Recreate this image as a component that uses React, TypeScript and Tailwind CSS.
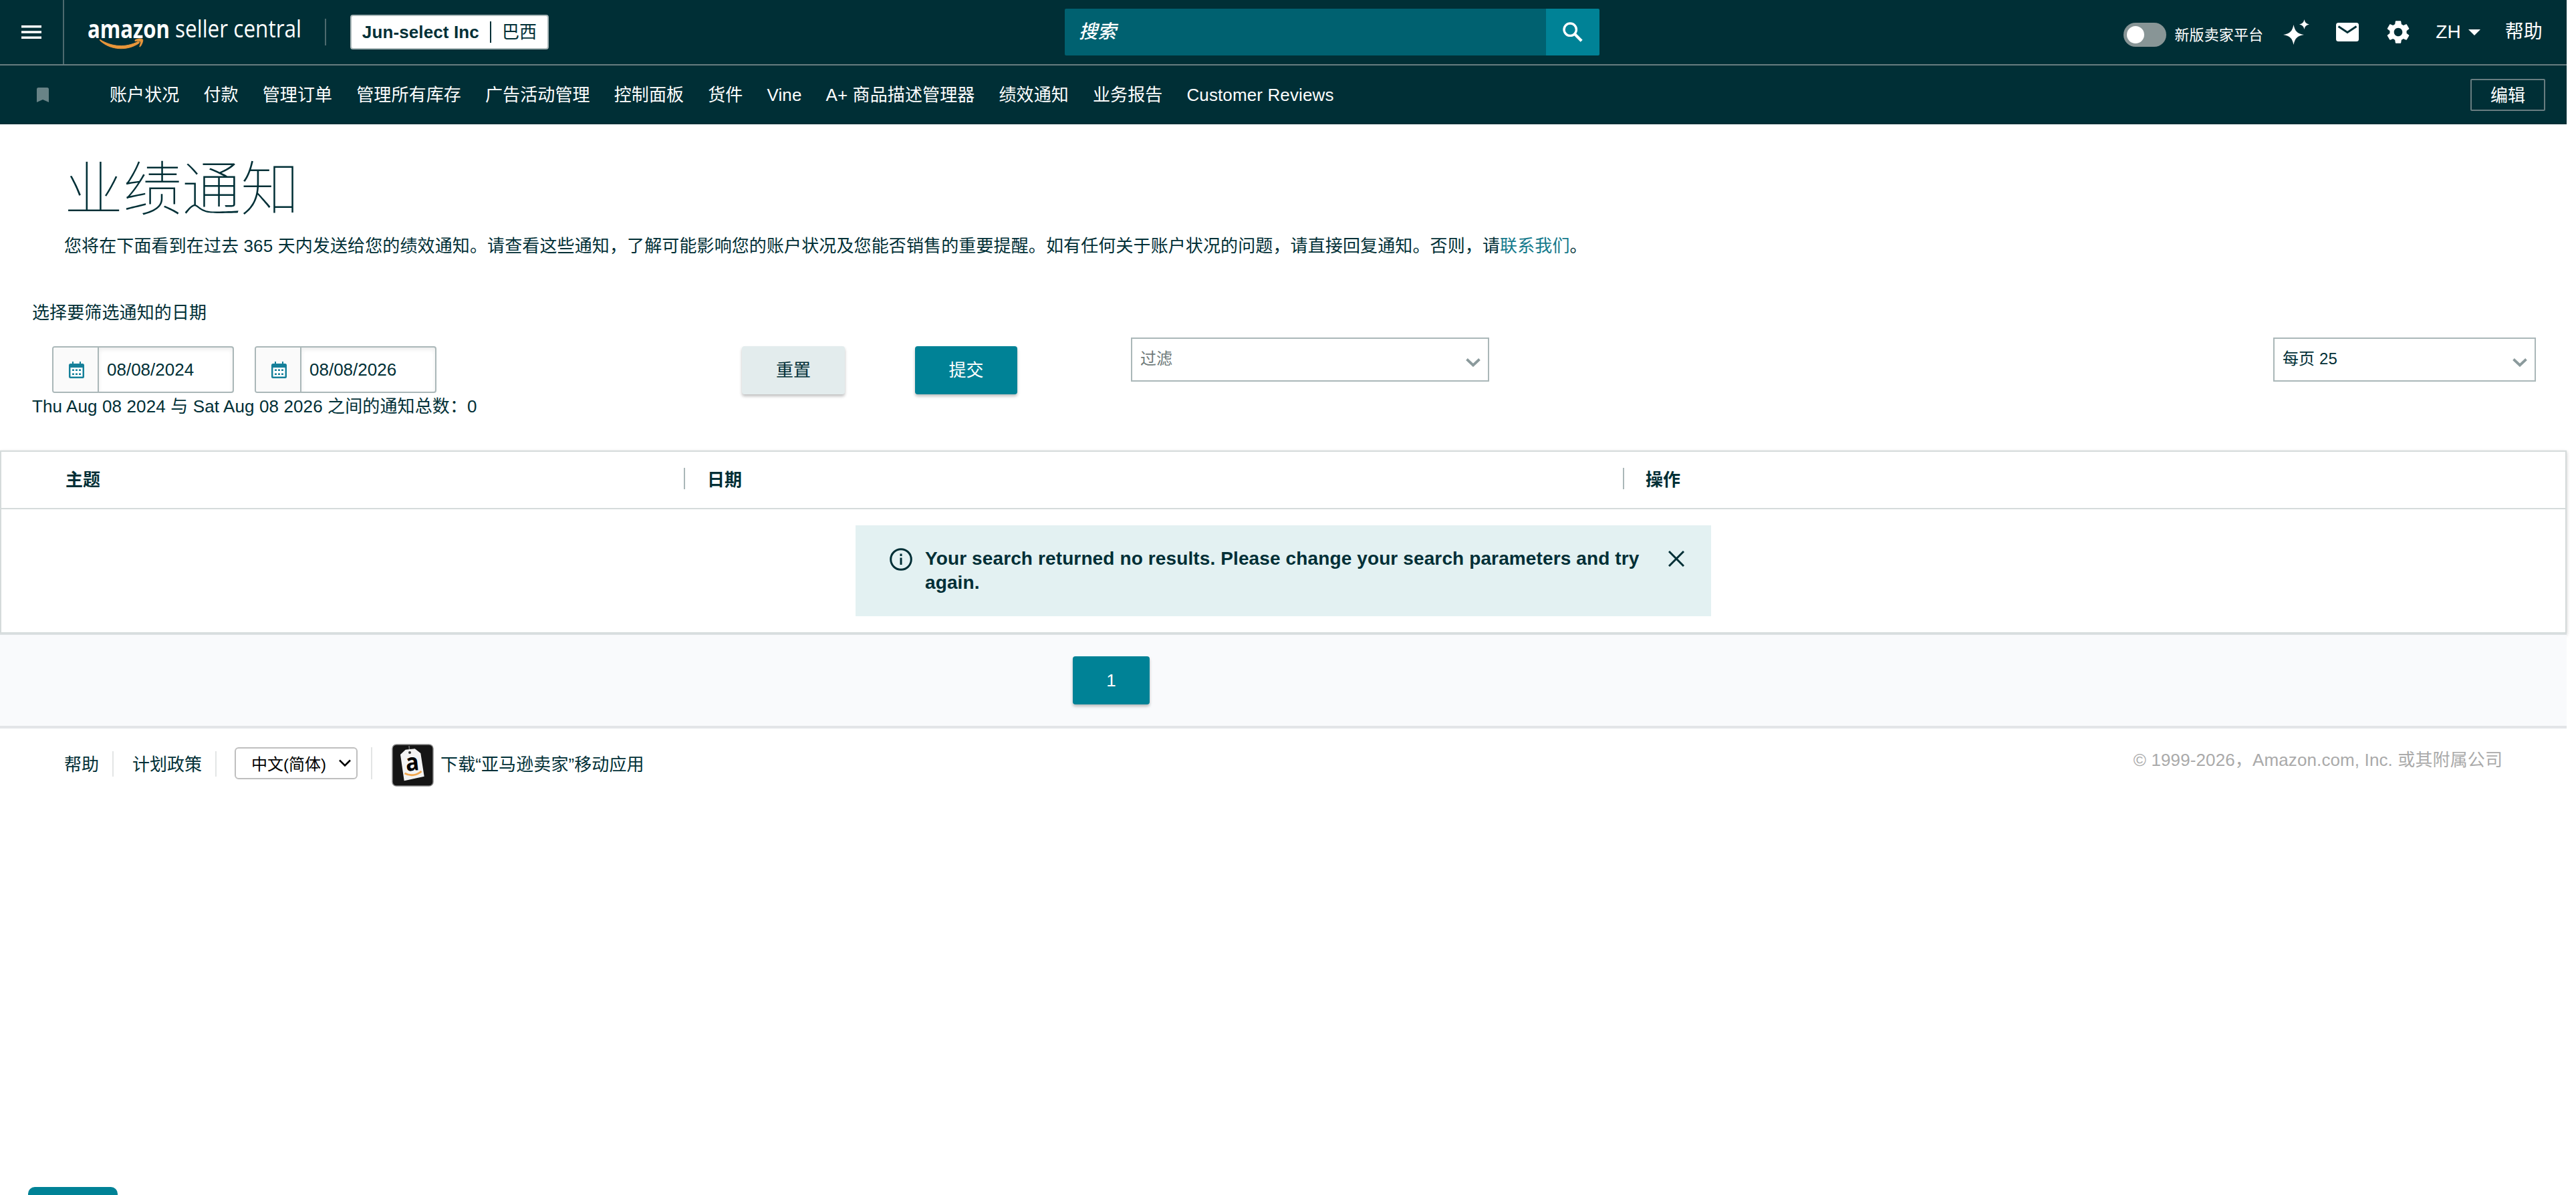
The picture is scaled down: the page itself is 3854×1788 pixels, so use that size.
import type { FC, ReactNode } from 'react';

const NAV_ITEMS = [
  '账户状况',
  '付款',
  '管理订单',
  '管理所有库存',
  '广告活动管理',
  '控制面板',
  '货件',
  'Vine',
  'A+ 商品描述管理器',
  '绩效通知',
  '业务报告',
  'Customer Reviews',
];

const Logo: FC = () => (
  <svg className="ml-[24px] h-[96px] w-[366px] shrink-0 overflow-visible" viewBox="120 0 366 96" fill="none">
    <text
      x="131"
      y="57"
      textLength="123"
      lengthAdjust="spacingAndGlyphs"
      className="fill-white font-['Open_Sans'] text-[37px] font-bold tracking-normal"
    >
      amazon
    </text>
    <text
      x="262"
      y="56"
      textLength="189"
      lengthAdjust="spacingAndGlyphs"
      className="fill-white font-['Open_Sans'] text-[37px] tracking-normal"
    >
      seller central
    </text>
    <path d="M150 59.500c18 11 38 12 56 3 2-1 3.500.500 2 2-17 12-43 11-58.500-4-.500-.8-.3-1.400.500-1z" fill="#e8963a" stroke="#e8963a" />
    <path d="M202 60c4-2.500 10.500-2.500 11.500-1s-1 7.500-3.500 10.500c-1 1-1.500.500-1-.5 1-2.500 2-6 1-7s-5-1-8-.5z" fill="#e8963a" stroke="#e8963a" />
  </svg>
);

const TopBar: FC = () => (
  <header className="flex h-[98px] items-center border-b-2 border-[#687d80] bg-[#002f36] text-white">
    <div className="flex h-full w-[96px] shrink-0 items-center justify-center border-r-2 border-[#4d6a6e]">
      <svg className="h-5 w-[30px]" viewBox="0 0 30 20" fill="#fff">
        <path d="M0 0h30v3.4H0zM0 8.3h30v3.4H0zM0 16.6h30V20H0z" />
      </svg>
    </div>
    <Logo />
    <div className="h-10 w-[2px] bg-[#4d6a6e]" />
    <button className="ml-[36px] flex h-[52px] w-[297px] items-center justify-center rounded-[4px] border-2 border-[#aab7b8] bg-white text-[26px] text-[#002f36]">
      <span className="font-bold">Jun-select Inc</span>
      <span className="mx-[16px] h-8 w-[2px] bg-[#002f36]" />
      <span>巴西</span>
    </button>
    <div className="ml-[772px] flex h-[70px] w-[800px] overflow-hidden rounded-[2px]">
      <div className="flex flex-1 items-center bg-[#006170] pl-[21px] text-[28px] font-medium italic">搜索</div>
      <button className="flex w-[80px] items-center justify-center bg-[#008296]">
        <svg className="h-[30px] w-[30px]" viewBox="0 0 30 30" fill="none" stroke="#fff" strokeWidth="3.4">
          <circle cx="11.2" cy="11.2" r="9.2" />
          <path d="M17.8 17.8l10.4 10.4" strokeWidth="4.2" />
        </svg>
      </button>
    </div>
    <div className="ml-auto mr-[36px] flex items-center">
      <div className="mt-2 flex h-9 w-[64px] items-center rounded-full bg-[#889596] pl-[5px]">
        <div className="h-[26px] w-[26px] rounded-full bg-white" />
      </div>
      <span className="ml-[12px] mt-2 text-[22px]">新版卖家平台</span>
      <svg className="ml-[30px] h-[38px] w-[39px]" viewBox="0 0 39 38" fill="#fff">
        <path d="M15.5 8c2 9.500 5 13 15.500 15-10.500 2-13.500 5.500-15.500 15C13.500 28.500 10.500 25 0 23c10.500-2 13.500-5.500 15.500-15z" />
        <path d="M31.500 0c1 4.600 2.600 6.400 7.500 7.500-4.900 1.100-6.500 2.900-7.500 7.500-1-4.600-2.600-6.400-7.500-7.500 4.900-1.100 6.500-2.900 7.500-7.500z" />
      </svg>
      <svg className="ml-[40px] h-[28px] w-[34px]" viewBox="0 0 34 28">
        <rect width="34" height="28" rx="3.500" fill="#fff" />
        <path d="M3.500 5.500L17 14.500l13.500-9" fill="none" stroke="#002f36" strokeWidth="3" />
      </svg>
      <svg className="ml-[38px] h-[42px] w-[42px]" viewBox="0 0 24 24" fill="#fff">
        <path d="M19.140 12.940c.04-.3.06-.61.06-.94 0-.32-.02-.64-.07-.94l2.030-1.580c.18-.14.23-.41.12-.61l-1.920-3.320c-.12-.22-.37-.29-.59-.22l-2.390.96c-.5-.38-1.030-.7-1.620-.94l-.36-2.540c-.04-.24-.24-.41-.48-.41h-3.840c-.24 0-.43.17-.47.41l-.36 2.540c-.59.24-1.130.57-1.620.94l-2.390-.96c-.22-.08-.47 0-.59.22L2.740 8.870c-.12.21-.08.47.12.61l2.030 1.580c-.05.3-.09.63-.09.94s.02.64.07.94l-2.030 1.580c-.18.14-.23.41-.12.61l1.920 3.320c.12.22.37.29.59.22l2.390-.96c.5.38 1.030.7 1.620.94l.36 2.540c.05.24.24.41.48.41h3.840c.24 0 .44-.17.47-.41l.36-2.540c.59-.24 1.130-.56 1.620-.94l2.390.96c.22.08.47 0 .59-.22l1.920-3.320c.12-.22.07-.47-.12-.61l-2.010-1.580zM12 15.600c-1.980 0-3.600-1.620-3.600-3.600s1.620-3.600 3.600-3.600 3.600 1.620 3.600 3.600-1.620 3.600-3.600 3.600z" />
      </svg>
      <span className="ml-[35px] text-[28px]">ZH</span>
      <svg className="ml-[11px] h-[9px] w-[18px]" viewBox="0 0 18 9" fill="#fff">
        <path d="M0 0h18L9 9z" />
      </svg>
      <span className="ml-[37px] text-[28px]">帮助</span>
    </div>
  </header>
);

const NavBar: FC = () => (
  <nav className="flex h-[88px] items-center bg-[#002f36] text-[26px] text-white">
    <svg className="ml-[55px] h-[22px] w-[18px]" viewBox="0 0 18 22" fill="#688387">
      <path d="M2.500 0h13A2.500 2.500 0 0 1 18 2.500V22l-9-4-9 4V2.500A2.500 2.500 0 0 1 2.500 0z" />
    </svg>
    <ul className="ml-[91px] flex gap-[36px]">
      {NAV_ITEMS.map((item) => (
        <li key={item}>{item}</li>
      ))}
    </ul>
    <button className="ml-auto mr-[32px] h-12 w-[112px] rounded-[2px] border-2 border-[#687d80] pt-[3px]">编辑</button>
  </nav>
);

const DateInput: FC<{ value: string }> = ({ value }) => (
  <div className="flex h-[70px] w-[272px] overflow-hidden rounded-[4px] border-2 border-[#aab7b8] bg-white tracking-normal">
    <div className="flex w-[68px] items-center justify-center border-r-2 border-[#aab7b8] bg-[#fafafa] pl-[2px]">
      <svg className="h-[25px] w-[23px]" viewBox="0 0 23 25">
        <path d="M5 0h2v3h9V0h2v3h2.500A2.500 2.500 0 0 1 23 5.500v17a2.500 2.500 0 0 1-2.500 2.500h-18A2.500 2.500 0 0 1 0 22.500v-17A2.500 2.500 0 0 1 2.500 3H5z" fill="#15809a" />
        <path d="M2.500 9h18v13.500h-18z" fill="#fff" />
        <path d="M5 11.500h3v2.500H5zm5 0h3v2.500h-3zm5 0h3v2.500h-3zM5 17.500h3V20H5zm5 0h3V20h-3zm5 0h3V20h-3z" fill="#15809a" />
      </svg>
    </div>
    <div className="flex flex-1 items-center pl-[12px] shadow-[inset_0_3px_6px_rgba(0,0,0,0.08)]">{value}</div>
  </div>
);

const SelectBox: FC<{ className: string; children: ReactNode }> = ({ className, children }) => (
  <div className={`flex h-[66px] justify-between border-2 border-[#aab7b8] bg-white pl-[12px] pr-[11px] text-[24px] ${className}`}>
    <span className="mt-[12px]">{children}</span>
    <svg className="mt-[29px] h-[13px] w-[22px]" viewBox="0 0 22 13" fill="none" stroke="#8b9a9c" strokeWidth="3.800">
      <path d="M1.500 1.500L11 10.500l9.500-9" />
    </svg>
  </div>
);

const Filters: FC = () => (
  <section className="flex h-[156px] items-start">
    <div className="w-[1110px] pt-[13px]">
      <div className="flex gap-[31px] pl-[78px]">
        <DateInput value="08/08/2024" />
        <DateInput value="08/08/2026" />
      </div>
      <p className="pl-[48px] leading-[40px]">Thu Aug 08 2024 与 Sat Aug 08 2026 之间的通知总数：0</p>
    </div>
    <button className="mt-[13px] h-[72px] w-[154px] rounded-[4px] bg-[#e3eced] shadow-[0_3px_4px_rgba(0,0,0,0.25)]">重置</button>
    <button className="ml-[105px] mt-[13px] h-[72px] w-[153px] rounded-[4px] bg-[#008296] text-white shadow-[0_3px_4px_rgba(0,0,0,0.25)]">
      提交
    </button>
    <SelectBox className="ml-[170px] w-[536px] text-[#6f7b7b]">过滤</SelectBox>
    <SelectBox className="ml-auto mr-[46px] w-[393px]">每页 25</SelectBox>
  </section>
);

const ResultsTable: FC = () => (
  <section className="mt-[13px] h-[274px] border-2 border-[#d5dbdb] bg-white shadow-[0_2px_5px_rgba(0,0,0,0.22)]">
    <div className="flex h-[86px] border-b-2 border-[#d5dbdb] pt-6 font-bold leading-[36px]">
      <div className="w-[1021px] pl-[96px]">主题</div>
      <div className="h-8 w-[1405px] border-l-2 border-[#aab7b8] pl-[33px]">日期</div>
      <div className="h-8 border-l-2 border-[#aab7b8] pl-[32px]">操作</div>
    </div>
    <div className="mx-auto mt-6 flex h-[136px] w-[1280px] bg-[#e3f1f2] pt-8">
      <svg className="ml-[51px] mt-[2px] h-[34px] w-[34px] shrink-0" viewBox="0 0 34 34" fill="none" stroke="#002f36" strokeWidth="3">
        <circle cx="17" cy="17" r="15.300" />
        <path d="M17 14.500V25M17 8.500v3.500" />
      </svg>
      <p className="ml-[19px] w-[1090px] text-[28px] font-bold leading-[36px] tracking-[0.12px]">
        Your search returned no results. Please change your search parameters and try again.
      </p>
      <svg className="ml-[22px] mt-[6px] h-6 w-6 shrink-0" viewBox="0 0 24 24" stroke="#002f36" strokeWidth="3">
        <path d="M1 1l22 22M23 1L1 23" />
      </svg>
    </div>
  </section>
);

const AppIcon: FC = () => (
  <svg className="ml-[29px] mt-[-2px] h-[64px] w-[63px]" viewBox="0 0 63 64">
    <rect x="1" y="1" width="61" height="62" rx="6" fill="#151515" stroke="#8a8a8a" strokeWidth="1.500" />
    <path d="M26 3l1 10" stroke="#777" strokeWidth="1.500" />
    <path d="M13 16l7.700-7.300 14-1.400 8.600 6.700 5.400 34.700-30 6.600z" fill="#f3f3f3" />
    <circle cx="27" cy="13" r="2" fill="#333" />
    <text
      x="21"
      y="40"
      textLength="20"
      lengthAdjust="spacingAndGlyphs"
      className="fill-black font-['Open_Sans'] text-[36px] font-bold tracking-normal"
      transform="rotate(-6 30 32)"
    >
      a
    </text>
    <path d="M19.500 44c8 4.500 18 3.500 25-3" fill="none" stroke="#f2a850" strokeWidth="3" />
  </svg>
);

const Footer: FC = () => (
  <footer className="flex items-start pt-6 tracking-normal">
    <div className="flex h-[64px] items-center">
      <span className="mt-[-4px] pl-[96px]">帮助</span>
      <span className="ml-[20px] mt-[-6px] h-[38px] w-[2px] bg-[#e3e5e5]" />
      <span className="ml-[28px] mt-[-4px]">计划政策</span>
      <span className="ml-[20px] mt-[-6px] h-[38px] w-[2px] bg-[#e3e5e5]" />
      <div className="ml-[27px] mt-[-8px] flex h-12 w-[184px] items-center justify-between rounded-[6px] border-2 border-[#bfbfbf] pl-[23px] pr-[8px] text-[24px] text-black">
        <span className="pt-[3px]">中文(简体)</span>
        <svg className="h-[12px] w-[18px]" viewBox="0 0 18 12" fill="none" stroke="#000" strokeWidth="2.600">
          <path d="M1 1.500l8 8 8-8" />
        </svg>
      </div>
      <span className="ml-[20px] mt-[-8px] h-12 w-[2px] bg-[#e3e5e5]" />
      <AppIcon />
      <span className="ml-[10px] mt-[-4px] tracking-[0.1px]">下载“亚马逊卖家”移动应用</span>
    </div>
    <span className="ml-auto mr-[96px] mt-[4px] text-[#aaa] tracking-[0.12px]">© 1999-2026，Amazon.com, Inc. 或其附属公司</span>
  </footer>
);

export default function App() {
  return (
    <div className="h-[1788px] w-full overflow-hidden bg-white">
      <div className="w-[3840px] font-['Liberation_Sans','Noto_Sans_CJK_SC',sans-serif] text-[26px] tracking-[0.12px] text-[#002f36]">
        <TopBar />
        <NavBar />
        <h1 className="mt-[35px] pl-[96px] text-[88px] font-thin leading-[126px] tracking-normal">业绩通知</h1>
        <p className="mt-[1px] pl-[96px] leading-[40px]">
          您将在下面看到在过去 365 天内发送给您的绩效通知。请查看这些通知，了解可能影响您的账户状况及您能否销售的重要提醒。如有任何关于账户状况的问题，请直接回复通知。否则，请
          <a className="text-[#157a8c]">联系我们</a>。
        </p>
        <p className="mb-[17px] mt-[60px] pl-[48px] leading-[40px]">选择要筛选通知的日期</p>
        <Filters />
        <ResultsTable />
        <div className="relative h-[142px] border-b-4 border-t-2 border-b-[#e3e5e8] border-t-[#dde1e3] bg-[#f9fafc] pt-8">
          <button className="ml-[1605px] h-[72px] w-[115px] rounded-[4px] bg-[#008296] text-white shadow-[0_3px_4px_rgba(0,0,0,0.25)]">1</button>
        </div>
        <Footer />
      </div>
      <div className="fixed bottom-0 left-[42px] h-[12px] w-[134px] rounded-t-[10px] bg-[#008296]" />
    </div>
  );
}
